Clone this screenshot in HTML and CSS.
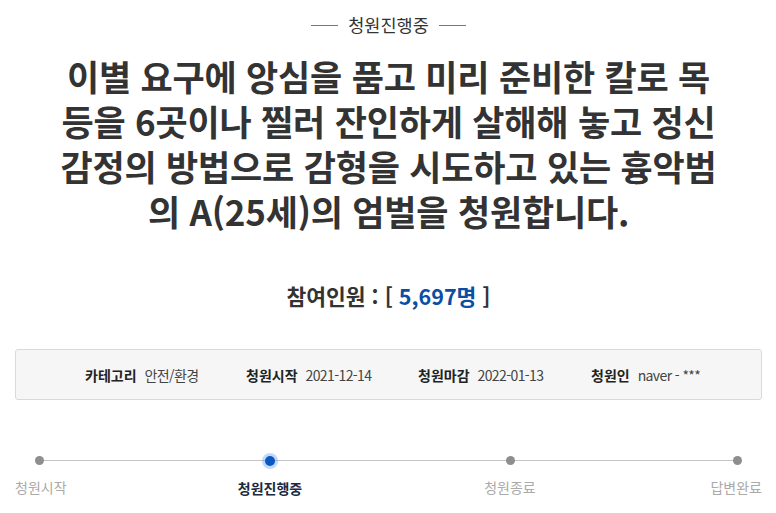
FILE: index.html
```html
<!DOCTYPE html>
<html lang="ko">
<head>
<meta charset="utf-8">
<link rel="stylesheet" href="styles.css">
</head>
<body>
<div class="page">
  <div class="status"><span class="dash"></span><span class="status-text">청원진행중</span><span class="dash"></span></div>
  <h1 class="title">이별 요구에 앙심을 품고 미리 준비한 칼로 목<br>등을 6곳이나 찔러 잔인하게 살해해 놓고 정신<br>감정의 방법으로 감형을 시도하고 있는 흉악범<br>의 A(25세)의 엄벌을 청원합니다.</h1>
  <div class="count">참여인원 : [ <span class="num">5,697명</span> ]</div>
  <div class="info">
    <div class="info-item"><b>카테고리</b><span>안전/환경</span></div>
    <div class="info-item"><b>청원시작</b><span>2021-12-14</span></div>
    <div class="info-item"><b>청원마감</b><span>2022-01-13</span></div>
    <div class="info-item"><b>청원인</b><span>naver - ***</span></div>
  </div>
  <div class="progress">
    <div class="track"></div>
    <div class="step step-first"><span class="dot"></span><span class="label">청원시작</span></div>
    <div class="step step-2 active"><span class="dot"></span><span class="label">청원진행중</span></div>
    <div class="step step-3"><span class="dot"></span><span class="label">청원종료</span></div>
    <div class="step step-last"><span class="dot"></span><span class="label">답변완료</span></div>
  </div>
</div>
</body>
</html>
```
FILE: styles.css
```css
* { box-sizing: border-box; }
html, body { margin: 0; padding: 0; background: #fff; }
body { font-family: "Noto Sans CJK KR", "Noto Sans", sans-serif; color: #333; }
.page { width: 776px; padding: 0 14px 0 15px; }
.status { display: flex; justify-content: center; align-items: center; gap: 10px; padding-top: 12px; height: 38px; }
.dash { width: 27px; height: 1px; background: #777; }
.status-text { font-size: 17.5px; line-height: 26px; color: #333; }
.title { margin: 15px 0 0; text-align: center; font-size: 35px; line-height: 45px; font-weight: 700; color: #333; letter-spacing: -0.2px; }
.count { margin-top: 48px; text-align: center; font-size: 21.5px; font-weight: 700; line-height: 30px; color: #333; }
.num { color: #0b4ea2; }
.info { margin-top: 38px; height: 51px; background: #f6f6f6; border: 1px solid #d9d9d9; border-radius: 3px; display: flex; align-items: center; padding-left: 69px; font-size: 14px; }
.info-item { display: flex; gap: 8px; }
.info-item:nth-child(1) { width: 161px; }
.info-item:nth-child(2) { width: 172px; }
.info-item:nth-child(3) { width: 173px; }
.info-item b { font-weight: 700; color: #222; }
.info-item span { color: #444; letter-spacing: -0.6px; }
.progress { position: relative; margin-top: 52px; display: flex; height: 50px; }
.track { position: absolute; left: 25px; right: 25px; top: 8px; height: 1px; background: #c4c4c4; }
.step { position: relative; display: flex; flex-direction: column; align-items: center; width: 100px; }
.step-2 { margin-left: 145px; }
.step-3 { margin-left: 140px; }
.step-first { align-items: flex-start; width: 60px; }
.step-last { align-items: flex-end; width: 60px; margin-left: 142px; }
.dot { width: 9px; height: 9px; border-radius: 50%; background: #8e8e8e; margin-top: 4px; }
.step-first .dot { margin-left: 20px; }
.step-last .dot { margin-right: 20px; }
.active .dot { background: #0b57c4; box-shadow: 0 0 0 3px rgba(80,150,240,0.35); width: 10px; height: 10px; }
.label { margin-top: 12px; font-size: 14px; line-height: 20px; color: #aaa; white-space: nowrap; }
.active .label { color: #1a2a44; font-weight: 700; }
```
